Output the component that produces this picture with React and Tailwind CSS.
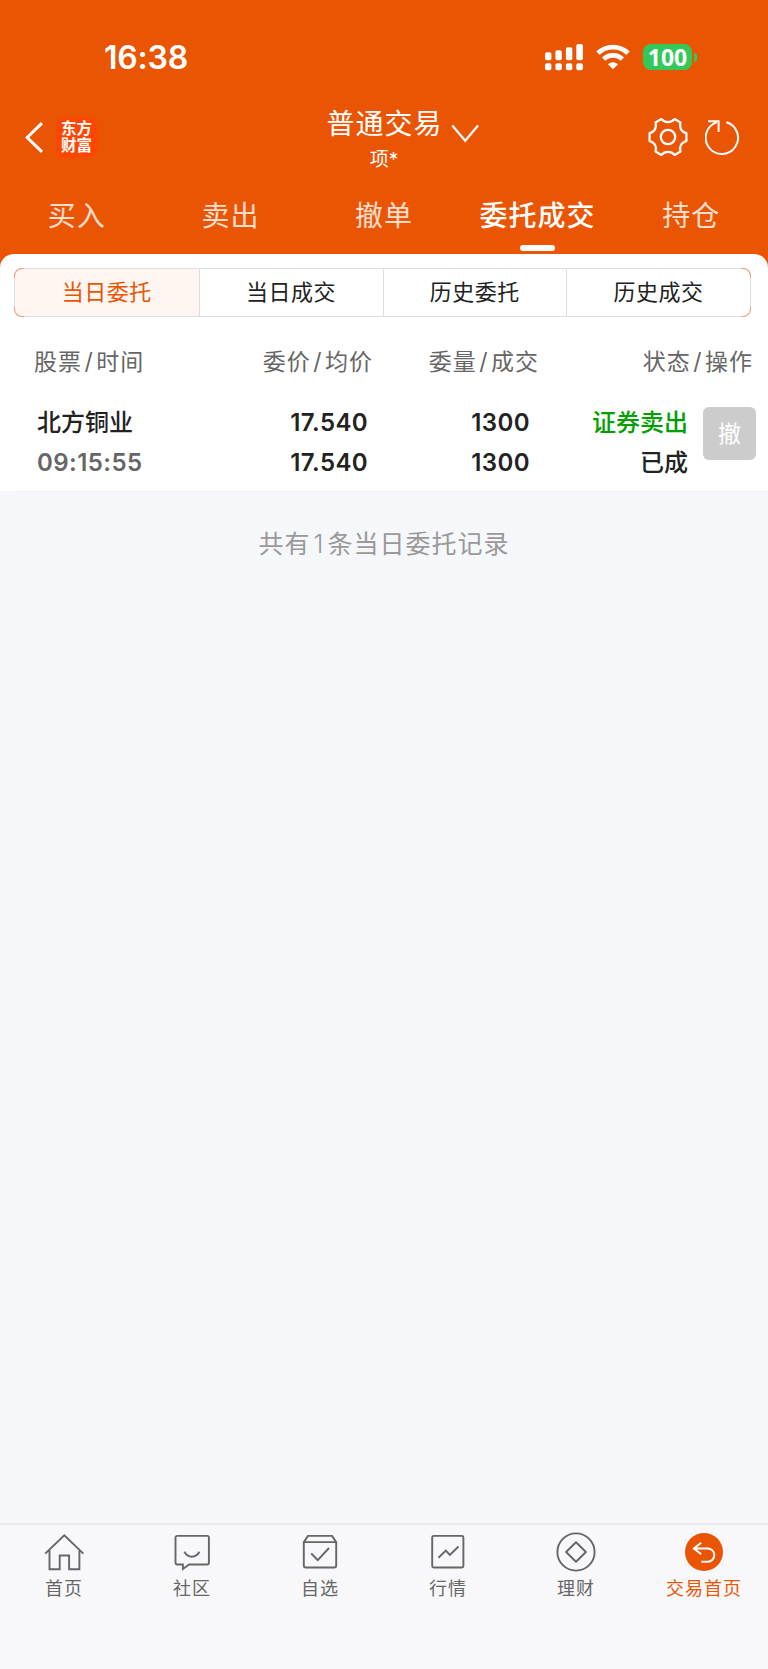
const tabs = ["买入", "卖出", "撤单", "委托成交", "持仓"];
const segments = ["当日委托", "当日成交", "历史委托", "历史成交"];

const HomeIcon = () => (
  <svg width="42" height="42" viewBox="0 0 42 42" fill="none" stroke="currentColor" strokeWidth="1.9">
    <path d="M2.2 22.6 21.3 4.2l19.1 18.4M6.5 19.2v19h10.2V24.5h9.4v13.7h10.3v-19" />
  </svg>
);

const CommunityIcon = () => (
  <svg width="42" height="42" viewBox="0 0 42 42" fill="none" stroke="currentColor" strokeWidth="1.9">
    <path d="M6.2 4.9h30a1.7 1.7 0 0 1 1.7 1.7v25.2a1.7 1.7 0 0 1-1.7 1.7H18.2l-6.3 4.5v-4.5H6.2a1.7 1.7 0 0 1-1.7-1.7V6.6a1.7 1.7 0 0 1 1.7-1.7Z" />
    <path d="M13.4 20.8c3.6 6.6 11.4 6.6 15 0" />
  </svg>
);

const WatchlistIcon = () => (
  <svg width="42" height="42" viewBox="0 0 42 42" fill="none" stroke="currentColor" strokeWidth="1.9">
    <path d="M4.8 11.1 9 4.9h24l4.2 6.2v23.4a2 2 0 0 1-2 2H6.8a2 2 0 0 1-2-2V11.1ZM4.8 11.1h32.4" />
    <path d="m12.2 22.5 6.6 6.7L30 17" />
  </svg>
);

const MarketIcon = () => (
  <svg width="42" height="42" viewBox="0 0 42 42" fill="none" stroke="currentColor" strokeWidth="1.9">
    <rect x="5.2" y="4.9" width="31.2" height="31.6" rx="1.5" />
    <path d="m11.5 26.8 7.3-7.2 4.1 4.4 8.6-8.5" />
  </svg>
);

const WealthIcon = () => (
  <svg width="42" height="42" viewBox="0 0 42 42" fill="none" stroke="currentColor" strokeWidth="1.9">
    <circle cx="21" cy="21" r="18.6" />
    <path d="m21 11.3 9.9 9.7-9.9 9.7-9.9-9.7Z" strokeLinejoin="round" />
  </svg>
);

const TradeIcon = () => (
  <svg width="42" height="42" viewBox="0 0 42 42" fill="none">
    <circle cx="21" cy="21" r="19" fill="currentColor" />
    <path d="m18.2 11.8-7.3 5.6 7.3 5.8M11.2 17.4h13.5a6.6 6.6 0 0 1 0 13.3h-6.4" stroke="#fff" strokeWidth="2" />
  </svg>
);

const navItems = [
  { label: "首页", icon: <HomeIcon /> },
  { label: "社区", icon: <CommunityIcon /> },
  { label: "自选", icon: <WatchlistIcon /> },
  { label: "行情", icon: <MarketIcon /> },
  { label: "理财", icon: <WealthIcon /> },
  { label: "交易首页", icon: <TradeIcon />, active: true },
];

const StatusBar = () => (
  <div className="flex h-[114px] items-center justify-between pr-[71px] pl-[104px]">
    <span className="pt-[2px] text-[32px] leading-8 font-semibold tracking-[-0.2px]">16:38</span>
    <div className="flex items-center">
      <svg width="38" height="27" viewBox="0 0 38 27" fill="#fff">
        <rect x="0" y="8.3" width="6.4" height="8" rx="1.8" />
        <rect x="10.4" y="6.2" width="6.4" height="10.1" rx="1.8" />
        <rect x="20.9" y="3.2" width="6.4" height="13.1" rx="1.8" />
        <rect x="31.3" y="0" width="6.6" height="16.3" rx="1.8" />
        <rect x="0" y="19.3" width="6.4" height="7" rx="1.8" />
        <rect x="10.4" y="19.3" width="6.4" height="7" rx="1.8" />
        <rect x="20.9" y="19.3" width="6.4" height="7" rx="1.8" />
        <rect x="31.3" y="19.3" width="6.6" height="7" rx="1.8" />
      </svg>
      <svg className="ml-[13px]" width="34" height="26" viewBox="0 0 34 26">
        <path d="M2 9.2a21.4 21.4 0 0 1 30 0" fill="none" stroke="#fff" strokeWidth="4.8" />
        <path d="M7.6 15.1a13.6 13.6 0 0 1 18.8 0" fill="none" stroke="#fff" strokeWidth="4.6" />
        <path d="M12 20.2a7.2 7.2 0 0 1 10 0L17 25.2Z" fill="#fff" />
      </svg>
      <div className="ml-[13px] flex h-[26px] w-[49px] items-center justify-center rounded-[8px] bg-[#34c759]">
        <span className="font-['Noto_Sans',sans-serif] text-[23px] leading-6 font-bold">100</span>
      </div>
      <div className="ml-[2px] h-[9px] w-[3px] rounded-r-full bg-[#34c759]" />
    </div>
  </div>
);

const TitleBar = () => (
  <div className="grid h-[66px] grid-cols-[1fr_auto_1fr]">
    <div className="flex items-center pb-[20px] pl-[25px]">
      <svg width="18" height="31" viewBox="0 0 18 31" fill="none" stroke="#fff" strokeWidth="3">
        <path d="M17 1.2 2.2 15.5 17 29.8" />
      </svg>
      <div className="ml-[13px] flex h-[41px] w-[41px] flex-col items-center justify-center rounded-[8px] bg-[#ff4600] text-[15.5px] leading-[17.5px] font-bold">
        <span>东方</span>
        <span>财富</span>
      </div>
    </div>
    <div className="flex flex-col items-center">
      <span className="w-[115px] text-[28px] leading-[20px] tracking-[1px] whitespace-nowrap">普通交易</span>
      <span className="mt-[16px] text-[19px] leading-[20px]">项*</span>
    </div>
    <div className="flex items-center justify-between pr-[28px] pb-[21px]">
      <svg className="mt-[-7px] ml-[9px]" width="28" height="19" viewBox="0 0 28 19" fill="none" stroke="#fff" strokeWidth="2.2">
        <path d="m1.3 1.5 12.9 15.2L27 1.5" />
      </svg>
      <div className="flex items-center gap-[17px]">
        <svg width="40" height="40" viewBox="0 0 40 40" fill="none" stroke="#fff" strokeWidth="2.3">
          <path
            d="M13.3 2.1C16.8 6.1 23.2 6.1 26.7 2.1L32.4 5.4C31.2 10.6 33.4 14.5 38.4 16.2V23.8C33.4 25.5 31.2 29.4 32.4 34.6L26.7 37.9C23.2 33.9 16.8 33.9 13.3 37.9L7.6 34.6C8.8 29.4 6.6 25.5 1.6 23.8V16.2C6.6 14.5 8.8 10.6 7.6 5.4Z"
            strokeLinejoin="round"
          />
          <circle cx="20" cy="20" r="7.2" />
        </svg>
        <svg width="35" height="36" viewBox="0 0 35 36" fill="none" stroke="#fff" strokeWidth="2">
          <path d="M21.4 3.2A16.2 16.2 0 1 1 11.7 3.4M3 2.2h10.6v10.7" />
        </svg>
      </div>
    </div>
  </div>
);

const ColumnTitle = ({ first, second, className }) => (
  <span className={className}>
    {first}
    <span className="mx-[2.5px]">/</span>
    {second}
  </span>
);

export default function App() {
  return (
    <div className="flex h-[1669px] w-[768px] flex-col bg-[#f6f7fa] font-['Inter','Noto_Sans_CJK_SC',sans-serif] text-[#222]">
      <header className="h-[268px] bg-[#ea5504] text-white">
        <StatusBar />
        <TitleBar />
        <nav className="grid h-[74px] grid-cols-5 text-[28px] tracking-[1px]">
          {tabs.map((tab) => (
            <div key={tab} className="flex flex-col items-center pt-[16px]">
              <span className={tab === "委托成交" ? "leading-[40px] font-medium" : "leading-[40px] text-white/80"}>
                {tab}
              </span>
              {tab === "委托成交" && <span className="mt-[9px] h-[6px] w-[35px] rounded-full bg-white" />}
            </div>
          ))}
        </nav>
      </header>

      <main className="-mt-[14px] h-[237px] shrink-0 rounded-t-[14px] bg-white pt-[14px]">
        <div className="relative mr-[17px] ml-[14px] grid h-[49px] grid-cols-4 rounded-[8px] border border-[#dcdee4] text-[22px] tracking-[0.5px]">
          {segments.map((segment, index) => (
            <div
              key={segment}
              className={`flex items-center justify-center ${
                index === 0 ? "rounded-l-[7px] bg-[#fff5f1] text-[#ea5504]" : "border-l border-[#dcdee4]"
              }`}
            >
              {segment}
            </div>
          ))}
          <span className="absolute -top-px -left-px h-[10px] w-[10px] rounded-tl-[8px] border-t border-l border-[#eda27c]" />
          <span className="absolute -bottom-px -left-px h-[10px] w-[10px] rounded-bl-[8px] border-b border-l border-[#eda27c]" />
          <span className="absolute -top-px -right-px h-[10px] w-[10px] rounded-tr-[8px] border-t border-r border-[#eda27c]" />
          <span className="absolute -right-px -bottom-px h-[10px] w-[10px] rounded-br-[8px] border-r border-b border-[#eda27c]" />
        </div>

        <div className="mt-[27px] grid grid-cols-[180px_193px_166px_214px] text-right text-[23px] leading-[36px] tracking-[1px] text-[#666]">
          <ColumnTitle first="股票" second="时间" className="pl-[34px] text-left" />
          <ColumnTitle first="委价" second="均价" />
          <ColumnTitle first="委量" second="成交" />
          <ColumnTitle first="状态" second="操作" />
        </div>

        <div className="mt-[23px] grid grid-cols-[200px_168px_162px_158px_68px] text-right text-[24px] leading-[40px] font-semibold">
          <div className="pl-[37px] text-left">
            <p className="font-medium">北方铜业</p>
            <p className="tracking-[0.45px] text-[#666]">09:15:55</p>
          </div>
          <div className="tracking-[0.4px]">
            <p>17.540</p>
            <p>17.540</p>
          </div>
          <div className="tracking-[0.4px]">
            <p>1300</p>
            <p>1300</p>
          </div>
          <div className="font-medium">
            <p className="text-[#00a000]">证券卖出</p>
            <p>已成</p>
          </div>
          <button className="mt-[4px] ml-[15px] h-[53px] w-[53px] rounded-[6px] bg-[#ccc] text-[23px] font-normal text-white">
            撤
          </button>
        </div>
      </main>

      <div className="ml-[18px] h-px shrink-0 bg-[#f0f1f4]" />
      <p className="mt-[33px] flex-1 text-center text-[25px] leading-[38px] tracking-[1px] text-[#999]">
        共有<span className="mx-[3px] font-light">1</span>条当日委托记录
      </p>

      <footer className="grid h-[146px] shrink-0 grid-cols-6 border-t-2 border-[#e9ebef] bg-[#f8f8fb]">
        {navItems.map((item) => (
          <div
            key={item.label}
            className={`flex flex-col items-center pt-[6px] ${item.active ? "text-[#ea5504]" : "text-[#666]"}`}
          >
            {item.icon}
            <span className="mt-[3px] text-[18px] leading-[26px] tracking-[1px]">{item.label}</span>
          </div>
        ))}
      </footer>
    </div>
  );
}
